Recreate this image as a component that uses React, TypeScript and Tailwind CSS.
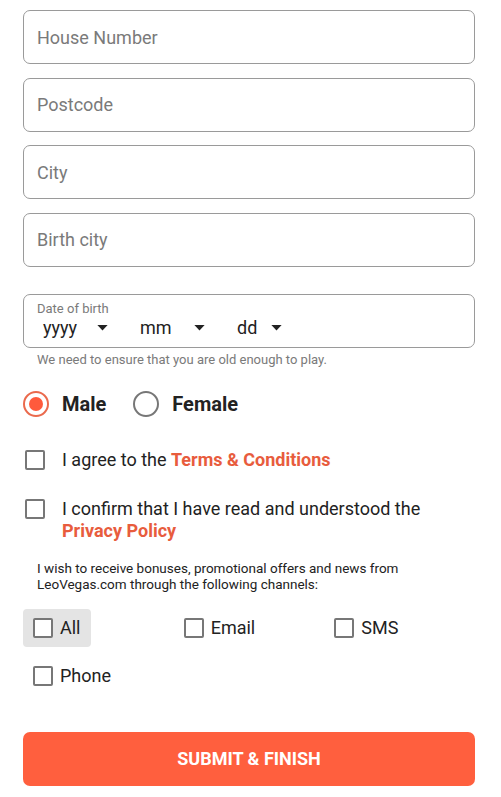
import React from "react";

const Caret = () => (
  <svg width="11" height="6" viewBox="0 0 12 7">
    <path d="M0 0 L12 0 L6 6.5 Z" fill="#222" />
  </svg>
);

const Box = () => (
  <span className="inline-block w-[20px] h-[20px] border-2 border-[#777] rounded-[2px] bg-white shrink-0" />
);

export default function App() {
  const inputs = ["House Number", "Postcode", "City", "Birth city"];
  return (
    <div className="w-[501px] h-[797px] bg-white pl-[23px] pr-[26px] pt-[10px]" style={{ fontFamily: "Roboto, 'Liberation Sans', sans-serif" }}>
      <div className="flex flex-col gap-[13.5px]">
        {inputs.map((p) => (
          <div key={p} className="h-[54px] border border-[#9a9a9a] rounded-[7px] flex items-center pl-[13px] text-[18px] text-[#7a7a7a]">
            {p}
          </div>
        ))}
      </div>

      <div className="mt-[27px] h-[54px] border border-[#9a9a9a] rounded-[7px] pl-[13px] pt-[6px]">
        <div className="text-[13px] leading-[16px] text-[#7a7a7a]">Date of birth</div>
        <div className="flex items-center text-[18px] leading-[22px] text-[#222] mt-[0px]">
          <span className="ml-[6px] w-[54px]">yyyy</span>
          <Caret />
          <span className="ml-[32px] w-[54px]">mm</span>
          <Caret />
          <span className="ml-[32px] w-[34px]">dd</span>
          <Caret />
        </div>
      </div>
      <div className="mt-[4px] pl-[14px] text-[13px] leading-[16px] text-[#7a7a7a]">We need to ensure that you are old enough to play.</div>

      <div className="mt-[21px] flex items-center h-[30px]">
        <span className="w-[26px] h-[26px] rounded-full border-2 border-[#ea6a4d] flex items-center justify-center">
          <span className="w-[14px] h-[14px] rounded-full bg-[#ff5a3c]" />
        </span>
        <span className="ml-[13px] text-[20px] font-bold text-[#222]">Male</span>
        <span className="ml-[27px] w-[26px] h-[26px] rounded-full border-2 border-[#777]" />
        <span className="ml-[13px] text-[20px] font-bold text-[#222]">Female</span>
      </div>

      <div className="mt-[30px] flex items-center pl-[2px] h-[22px]">
        <Box />
        <span className="ml-[17px] text-[18px] text-[#222]">
          I agree to the <span className="font-bold text-[#e85c3d]">Terms &amp; Conditions</span>
        </span>
      </div>

      <div className="mt-[27px] flex items-start pl-[2px]">
        <span className="mt-[1px]"><Box /></span>
        <span className="ml-[17px] text-[18px] leading-[22px] text-[#222]">
          I confirm that I have read and understood the<br />
          <span className="font-bold text-[#e85c3d]">Privacy Policy</span>
        </span>
      </div>

      <div className="mt-[18px] pl-[14px] text-[13.5px] leading-[16px] text-[#222]">
        I wish to receive bonuses, promotional offers and news from<br />
        LeoVegas.com through the following channels:
      </div>

      <div className="mt-[17px] grid grid-cols-3 gap-y-[10px]">
        {["All", "Email", "SMS", "Phone"].map((c, i) => (
          <div key={c} className="flex">
            <div className={`h-[38px] flex items-center pl-[10px] pr-[10px] rounded-[4px] ${i === 0 ? "bg-[#e4e4e4]" : ""}`}>
              <Box />
              <span className="ml-[7px] text-[18px] text-[#222]">{c}</span>
            </div>
          </div>
        ))}
      </div>

      <button className="mt-[37px] w-full h-[54px] rounded-[7px] bg-[#ff5f3e] text-white text-[18px] font-bold">
        SUBMIT &amp; FINISH
      </button>
    </div>
  );
}
